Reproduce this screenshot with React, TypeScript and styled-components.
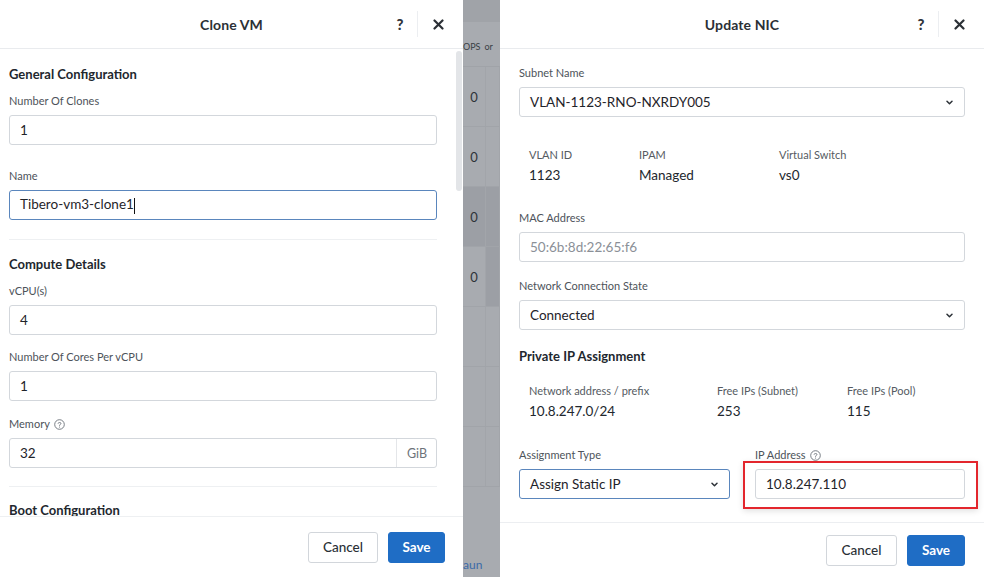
import styled, { createGlobalStyle } from 'styled-components';

const GlobalStyle = createGlobalStyle`
  html, body {
    margin: 0;
    padding: 0;
    background: #a9acb1;
  }
  body {
    font-family: Lato, "Open Sans", Arial, sans-serif;
    color: #22272e;
  }
  * { box-sizing: border-box; }
`;

const Screen = styled.div`
  width: 984px;
  height: 577px;
  display: flex;
  overflow: hidden;
  background: #a9acb1;
`;

const Dialog = styled.div<{ $width: number }>`
  width: ${p => p.$width}px;
  height: 577px;
  flex-shrink: 0;
  display: flex;
  flex-direction: column;
  background: #fff;
`;

const Header = styled.div`
  height: 49px;
  flex-shrink: 0;
  display: flex;
  align-items: center;
  border-bottom: 1px solid #e9ebee;
  position: relative;
`;

const Title = styled.div`
  flex: 1;
  text-align: center;
  font-size: 14px;
  font-weight: 700;
  color: #2b3036;
  letter-spacing: 0.1px;
`;

const HeaderActions = styled.div`
  position: absolute;
  right: 19px;
  top: 0;
  height: 48px;
  display: flex;
  align-items: center;
`;

const HelpButton = styled.span`
  font-size: 15px;
  font-weight: 900;
  color: #30353b;
  width: 12px;
  text-align: center;
`;

const HeaderSep = styled.span`
  width: 1px;
  height: 26px;
  background: #eceef1;
  margin: 0 15px 0 11px;
`;

const CloseIcon = () => (
  <svg width="11" height="11" viewBox="0 0 11 11">
    <path d="M1.5 1.5 L9.5 9.5 M9.5 1.5 L1.5 9.5" stroke="#2a2f35" strokeWidth="2.2" strokeLinecap="round" />
  </svg>
);

const Body = styled.div<{ $pad: string }>`
  flex: 1;
  overflow: hidden;
  position: relative;
  padding: ${p => p.$pad};
`;

const ScrollThumb = styled.div`
  position: absolute;
  right: 1px;
  top: 2px;
  width: 6px;
  height: 140px;
  border-radius: 3px;
  background: #e3e5e8;
`;

const SectionTitle = styled.div<{ $mt?: number }>`
  font-size: 13px;
  font-weight: 700;
  line-height: 18px;
  color: #22272e;
  margin-top: ${p => p.$mt ?? 0}px;
`;

const Label = styled.div<{ $mt?: number }>`
  font-size: 11px;
  line-height: 16px;
  color: #4d535a;
  margin-top: ${p => p.$mt ?? 0}px;
  margin-bottom: 6px;
  display: flex;
  align-items: center;
  gap: 4px;
`;

const Field = styled.div<{ $focus?: boolean; $disabled?: boolean }>`
  height: 30px;
  width: 100%;
  display: flex;
  align-items: center;
  border: 1px solid ${p => (p.$focus ? '#5a86bd' : '#d3d7dc')};
  border-radius: 3px;
  background: #fff;
  font-size: 13.5px;
  color: ${p => (p.$disabled ? '#8b9097' : '#1f242a')};
  padding-left: 10px;
  position: relative;
`;

const FieldValue = styled.span`
  flex: 1;
  white-space: nowrap;
`;

const Caret = styled.span`
  width: 1px;
  height: 16px;
  background: #111;
  display: inline-block;
  vertical-align: middle;
`;

const Suffix = styled.span`
  height: 100%;
  display: flex;
  align-items: center;
  padding: 0 9px 0 10px;
  border-left: 1px solid #e4e6e9;
  font-size: 12.5px;
  color: #6d737a;
`;

const Chevron = styled.span`
  padding: 0 11px 0 8px;
  display: flex;
  align-items: center;
`;

const ChevronIcon = () => (
  <svg width="7" height="5" viewBox="0 0 7 5">
    <path d="M1 1.2 L3.5 3.7 L6 1.2" fill="none" stroke="#2d3238" strokeWidth="1.5" strokeLinecap="round" strokeLinejoin="round" />
  </svg>
);

const HelpCircle = () => (
  <svg width="11" height="11" viewBox="0 0 11 11">
    <circle cx="5.5" cy="5.5" r="4.8" fill="none" stroke="#6a7078" strokeWidth="0.9" />
    <path d="M4 4.3 C4 3.2 7 3.2 7 4.4 C7 5.3 5.5 5.3 5.5 6.4" fill="none" stroke="#6a7078" strokeWidth="0.9" strokeLinecap="round" />
    <circle cx="5.5" cy="8" r="0.55" fill="#6a7078" />
  </svg>
);

const Divider = styled.div<{ $mt: number }>`
  height: 1px;
  background: #eef0f2;
  margin-top: ${p => p.$mt}px;
`;

const Footer = styled.div<{ $height: number; $pr: number; $border: string }>`
  height: ${p => p.$height}px;
  flex-shrink: 0;
  display: flex;
  align-items: center;
  justify-content: flex-end;
  gap: 10px;
  padding-right: ${p => p.$pr}px;
  border-top: 1px solid ${p => p.$border};
`;

const Button = styled.button<{ $primary?: boolean; $width: number }>`
  height: 31px;
  width: ${p => p.$width}px;
  border-radius: 3px;
  font-family: inherit;
  font-size: 13.5px;
  font-weight: ${p => (p.$primary ? 700 : 500)};
  border: 1px solid ${p => (p.$primary ? '#1f6dc5' : '#d2d6db')};
  background: ${p => (p.$primary ? '#1f6dc5' : '#fff')};
  color: ${p => (p.$primary ? '#fff' : '#2a2f35')};
  padding: 0;
`;

/* backdrop strip: the table behind the dialogs */
const Backdrop = styled.div`
  width: 37px;
  flex-shrink: 0;
  display: flex;
  flex-direction: column;
  background: #a8abb0;
  color: #3a3f45;
`;

const BackTop = styled.div`
  height: 22px;
  background: #a0a3a8;
`;

const BackHead = styled.div`
  height: 45px;
  display: flex;
  align-items: flex-end;
  padding-bottom: 14px;
  border-bottom: 1px solid #a0a3a8;
  white-space: nowrap;
  font-size: 9px;
  gap: 4px;
`;

const BackRow = styled.div`
  height: 60px;
  display: flex;
  border-bottom: 1px solid #a1a4a9;
`;

const BackCell = styled.div<{ $w: number; $dark?: boolean }>`
  width: ${p => p.$w}px;
  height: 100%;
  display: flex;
  align-items: center;
  justify-content: center;
  background: ${p => (p.$dark ? '#9c9fa5' : 'transparent')};
  border-right: 1px solid #a2a5aa;
  font-size: 13px;
  color: #2e3339;
`;

const BackLink = styled.div`
  margin-top: auto;
  height: 22px;
  font-size: 12px;
  color: #3b6aa8;
  padding-top: 2px;
`;

const InfoGrid = styled.div<{ $cols: string; $mt: number }>`
  display: grid;
  grid-template-columns: ${p => p.$cols};
  padding-left: 10px;
  margin-top: ${p => p.$mt}px;
`;

const InfoItem = styled.div`
  display: flex;
  flex-direction: column;
  gap: 3px;
`;

const InfoLabel = styled.span`
  font-size: 11px;
  line-height: 16px;
  color: #555b62;
`;

const InfoValue = styled.span`
  font-size: 13.5px;
  line-height: 18px;
  color: #22272e;
`;

const SplitRow = styled.div`
  display: flex;
  gap: 25px;
  margin-top: 27px;
`;

const SplitCol = styled.div<{ $width: number }>`
  width: ${p => p.$width}px;
  display: flex;
  flex-direction: column;
`;

const Highlight = styled.div`
  position: relative;
  &::after {
    content: '';
    position: absolute;
    left: -12px;
    right: -13px;
    top: -8px;
    bottom: -10px;
    border: 2px solid #e3262d;
    box-shadow: 0 2px 6px rgba(0, 0, 0, 0.12);
    pointer-events: none;
  }
`;

export default function App() {
  const rows = [
    { v: '0' },
    { v: '0' },
    { v: '0', dark: true },
    { v: '0', rightDark: true },
    { v: '' },
    { v: '' },
    { v: '' },
  ];
  return (
    <>
      <GlobalStyle />
      <Screen>
        <Dialog $width={463}>
          <Header>
            <Title>Clone VM</Title>
            <HeaderActions>
              <HelpButton>?</HelpButton>
              <HeaderSep />
              <CloseIcon />
            </HeaderActions>
          </Header>
          <Body $pad="16px 26px 0 9px">
            <ScrollThumb />
            <SectionTitle>General Configuration</SectionTitle>
            <Label $mt={10}>Number Of Clones</Label>
            <Field><FieldValue>1</FieldValue></Field>
            <Label $mt={23}>Name</Label>
            <Field $focus>
              <FieldValue>Tibero-vm3-clone1<Caret /></FieldValue>
            </Field>
            <Divider $mt={19} />
            <SectionTitle $mt={15}>Compute Details</SectionTitle>
            <Label $mt={10}>vCPU(s)</Label>
            <Field><FieldValue>4</FieldValue></Field>
            <Label $mt={14}>Number Of Cores Per vCPU</Label>
            <Field><FieldValue>1</FieldValue></Field>
            <Label $mt={15}>Memory <HelpCircle /></Label>
            <Field>
              <FieldValue>32</FieldValue>
              <Suffix>GiB</Suffix>
            </Field>
            <Divider $mt={18} />
            <SectionTitle $mt={14}>Boot Configuration</SectionTitle>
          </Body>
          <Footer $height={61} $pr={18} $border="#eef0f2">
            <Button $width={70}>Cancel</Button>
            <Button $primary $width={57}>Save</Button>
          </Footer>
        </Dialog>

        <Backdrop>
          <BackTop />
          <BackHead><span>OPS</span><span>or</span></BackHead>
          {rows.map((r, i) => (
            <BackRow key={i}>
              <BackCell $w={23} $dark={r.dark}>{r.v}</BackCell>
              <BackCell $w={14} $dark={r.dark || r.rightDark} />
            </BackRow>
          ))}
          <BackLink>aun</BackLink>
        </Backdrop>

        <Dialog $width={484}>
          <Header>
            <Title>Update NIC</Title>
            <HeaderActions>
              <HelpButton>?</HelpButton>
              <HeaderSep />
              <CloseIcon />
            </HeaderActions>
          </Header>
          <Body $pad="16px 19px 0 19px">
            <Label>Subnet Name</Label>
            <Field>
              <FieldValue>VLAN-1123-RNO-NXRDY005</FieldValue>
              <Chevron><ChevronIcon /></Chevron>
            </Field>
            <InfoGrid $cols="110px 140px 1fr" $mt={30}>
              <InfoItem><InfoLabel>VLAN ID</InfoLabel><InfoValue>1123</InfoValue></InfoItem>
              <InfoItem><InfoLabel>IPAM</InfoLabel><InfoValue>Managed</InfoValue></InfoItem>
              <InfoItem><InfoLabel>Virtual Switch</InfoLabel><InfoValue>vs0</InfoValue></InfoItem>
            </InfoGrid>
            <Label $mt={26}>MAC Address</Label>
            <Field $disabled><FieldValue>50:6b:8d:22:65:f6</FieldValue></Field>
            <Label $mt={16}>Network Connection State</Label>
            <Field>
              <FieldValue>Connected</FieldValue>
              <Chevron><ChevronIcon /></Chevron>
            </Field>
            <SectionTitle $mt={17}>Private IP Assignment</SectionTitle>
            <InfoGrid $cols="188px 130px 1fr" $mt={18}>
              <InfoItem><InfoLabel>Network address / prefix</InfoLabel><InfoValue>10.8.247.0/24</InfoValue></InfoItem>
              <InfoItem><InfoLabel>Free IPs (Subnet)</InfoLabel><InfoValue>253</InfoValue></InfoItem>
              <InfoItem><InfoLabel>Free IPs (Pool)</InfoLabel><InfoValue>115</InfoValue></InfoItem>
            </InfoGrid>
            <SplitRow>
              <SplitCol $width={211}>
                <Label>Assignment Type</Label>
                <Field $focus>
                  <FieldValue>Assign Static IP</FieldValue>
                  <Chevron><ChevronIcon /></Chevron>
                </Field>
              </SplitCol>
              <SplitCol $width={210}>
                <Label>IP Address <HelpCircle /></Label>
                <Highlight>
                  <Field><FieldValue>10.8.247.110</FieldValue></Field>
                </Highlight>
              </SplitCol>
            </SplitRow>
          </Body>
          <Footer $height={55} $pr={19} $border="#eceef1">
            <Button $width={71}>Cancel</Button>
            <Button $primary $width={58}>Save</Button>
          </Footer>
        </Dialog>
      </Screen>
    </>
  );
}
